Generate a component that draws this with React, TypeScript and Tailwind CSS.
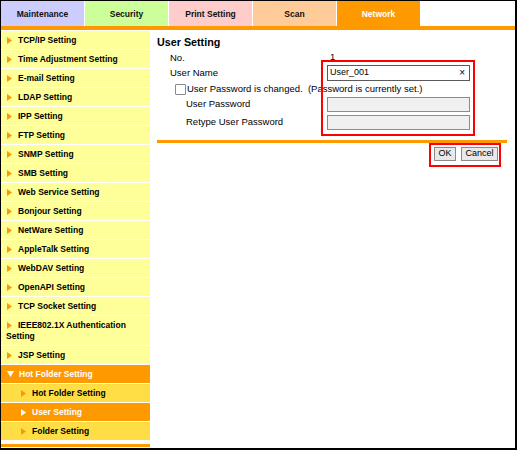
import React from "react";

const Tri = ({ color = "#ff9900", down = false }: { color?: string; down?: boolean }) =>
  down ? (
    <svg width="7" height="6" viewBox="0 0 7 6" className="inline-block mr-[5px] align-[0px]">
      <polygon points="0,0 7,0 3.5,6" fill={color} />
    </svg>
  ) : (
    <svg width="5" height="7" viewBox="0 0 5 7" className="inline-block mr-[6px] align-[-1px]">
      <polygon points="0,0 5,3.5 0,7" fill={color} />
    </svg>
  );

type Item = { label: string; kind?: "main" | "open" | "sub" | "subActive"; tall?: boolean };

const items: Item[] = [
  { label: "TCP/IP Setting" },
  { label: "Time Adjustment Setting" },
  { label: "E-mail Setting" },
  { label: "LDAP Setting" },
  { label: "IPP Setting" },
  { label: "FTP Setting" },
  { label: "SNMP Setting" },
  { label: "SMB Setting" },
  { label: "Web Service Setting" },
  { label: "Bonjour Setting" },
  { label: "NetWare Setting" },
  { label: "AppleTalk Setting" },
  { label: "WebDAV Setting" },
  { label: "OpenAPI Setting" },
  { label: "TCP Socket Setting" },
  { label: "IEEE802.1X Authentication Setting", tall: true },
  { label: "JSP Setting" },
  { label: "Hot Folder Setting", kind: "open" },
  { label: "Hot Folder Setting", kind: "sub" },
  { label: "User Setting", kind: "subActive" },
  { label: "Folder Setting", kind: "sub" },
];

const tabs = [
  { label: "Maintenance", cls: "bg-[#ccccff] text-[#111]" },
  { label: "Security", cls: "bg-[#ccff99] text-[#111]" },
  { label: "Print Setting", cls: "bg-[#ffcccc] text-[#111]" },
  { label: "Scan", cls: "bg-[#ffcc99] text-[#111]" },
  { label: "Network", cls: "bg-[#ff9900] text-white" },
];

function SideRow({ it }: { it: Item }) {
  if (it.kind === "open") {
    return (
      <div className="h-[18px] bg-[#ff9900] text-white pl-[6px] flex items-center">
        <span>
          <Tri color="#ffffff" down />
          {it.label}
        </span>
      </div>
    );
  }
  if (it.kind === "sub") {
    return (
      <div className="h-[18px] bg-[#ffdd44] text-black pl-[20px] flex items-center">
        <span>
          <Tri />
          {it.label}
        </span>
      </div>
    );
  }
  if (it.kind === "subActive") {
    return (
      <div className="h-[18px] bg-[#ff9900] text-white pl-[20px] flex items-center">
        <span>
          <Tri color="#ffffff" />
          {it.label}
        </span>
      </div>
    );
  }
  if (it.tall) {
    return (
      <div className="h-[29px] bg-[#ffff99] text-black pl-[5px] pr-[2px] pt-[4px] leading-[11px]">
        <span className="pl-[1px]">
          <Tri />
        </span>
        {it.label}
      </div>
    );
  }
  return (
    <div className="h-[18px] bg-[#ffff99] text-black pl-[6px] flex items-center">
      <span>
        <Tri />
        {it.label}
      </span>
    </div>
  );
}

export default function App() {
  return (
    <div
      className="w-[517px] h-[450px] border-t border-l border-r-2 border-b-2 border-black bg-white flex flex-col overflow-hidden"
      style={{ fontFamily: '"Liberation Sans", Arial, sans-serif' }}
    >
      {/* tabs */}
      <div className="flex gap-[1px] h-[25px] shrink-0">
        {tabs.map((t) => (
          <div
            key={t.label}
            className={`w-[83px] flex items-center justify-center pt-[2px] font-bold text-[8.5px] ${t.cls}`}
          >
            {t.label}
          </div>
        ))}
      </div>
      <div className="h-[4px] bg-[#ff9900] shrink-0" />

      <div className="flex flex-1">
        {/* sidebar */}
        <div className="w-[149px] shrink-0 pt-[1px] flex flex-col">
          <div className="flex flex-col gap-[1px] font-bold text-[8.5px]">
            {items.map((it, i) => (
              <SideRow key={i} it={it} />
            ))}
          </div>
          <div className="mt-[4px] h-[3px] bg-[#ff9900]" />
        </div>

        {/* main */}
        <div className="flex-1 relative pl-[7px] pr-[8px] text-[9.5px] text-black">
          <div className="mt-[5px] h-[14px] leading-[14px] font-bold text-[10.75px]">User Setting</div>

          <div className="mt-[2px] h-[14px] flex items-center">
            <div className="w-[170px] pl-[13px]">No.</div>
            <div className="pl-[3px] -mt-[2px]">1</div>
          </div>

          <div className="h-[16px] flex items-center">
            <div className="w-[170px] pl-[13px]">User Name</div>
            <div className="w-[143px] h-[16px] border border-[#5a5a5a] bg-white flex items-center justify-between pl-[2px] pr-[4px] text-[9px]">
              <span>User_001</span>
              <span className="text-[10px] leading-none">×</span>
            </div>
          </div>

          <div className="h-[16px] flex items-center pl-[18px]">
            <div className="w-[11px] h-[11px] border border-[#8a8a8a] bg-white rounded-[1px] shrink-0" />
            <span className="ml-[1px] whitespace-pre">User Password is changed.  (Password is currently set.)</span>
          </div>

          <div className="h-[15px] flex items-center">
            <div className="w-[170px] pl-[29px]">User Password</div>
            <div className="w-[143px] h-[15px] border border-[#8c8c8c] bg-[#f0f0f0]" />
          </div>

          <div className="mt-[3px] h-[15px] flex items-center">
            <div className="w-[170px] pl-[29px]">Retype User Password</div>
            <div className="w-[143px] h-[15px] border border-[#8c8c8c] bg-[#f0f0f0]" />
          </div>

          <div className="mt-[10px] h-[3px] bg-[#ff9900]" />

          <div className="mt-[4px] flex justify-end gap-[5px] pr-[9px] text-[9px]">
            <div className="w-[22px] h-[14px] border border-[#8a8a8a] bg-[#e9e9e9] flex items-center justify-center whitespace-nowrap">
              OK
            </div>
            <div className="w-[37px] h-[14px] border border-[#8a8a8a] bg-[#e9e9e9] flex items-center justify-center whitespace-nowrap">
              Cancel
            </div>
          </div>

          {/* red annotation boxes */}
          <div className="absolute left-[171px] top-[30px] w-[154px] h-[76px] border-2 border-[#ff0000] pointer-events-none" />
          <div className="absolute left-[279px] top-[113px] w-[72px] h-[24px] border-2 border-[#ff0000] pointer-events-none" />
        </div>
      </div>
    </div>
  );
}
